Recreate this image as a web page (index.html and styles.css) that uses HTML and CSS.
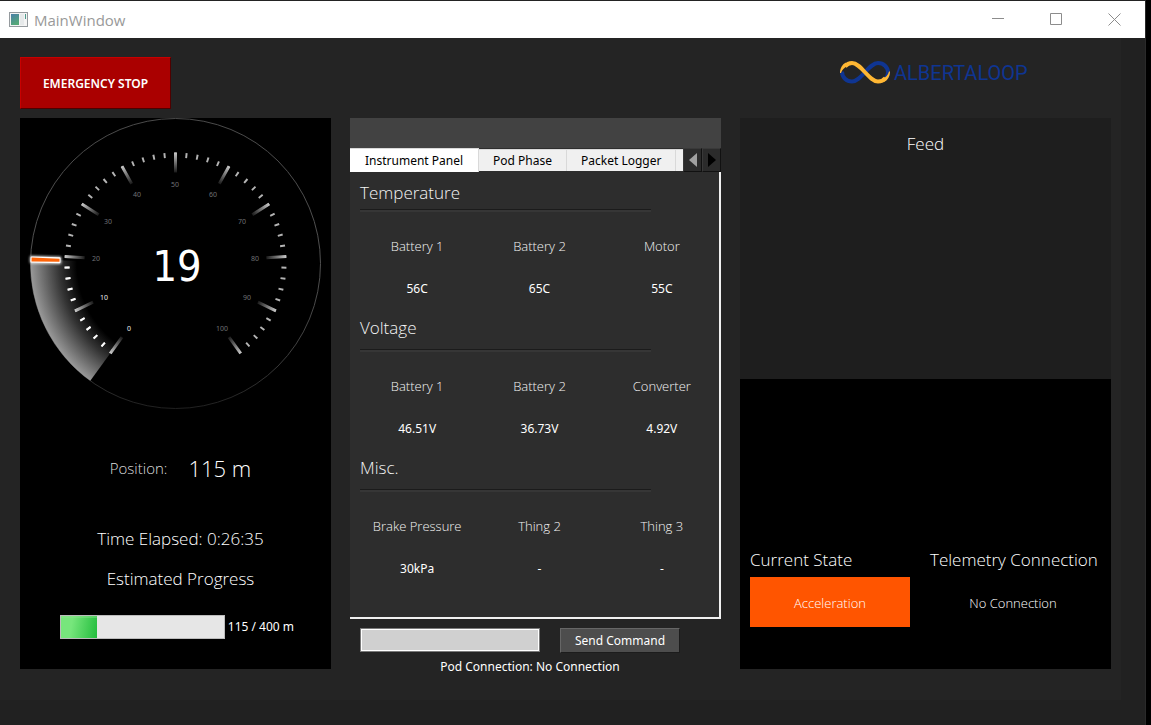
FILE: index.html
```html
<!DOCTYPE html>
<html lang="en">
<head>
<meta charset="utf-8">
<title>MainWindow</title>
<link rel="stylesheet" href="styles.css">
</head>
<body>
<div class="window">
  <header class="titlebar">
    <svg class="app-icon" width="19" height="16" viewBox="0 0 19 16" aria-hidden="true">
      <defs><linearGradient id="app" x1="0" y1="0" x2="0.4" y2="1"><stop offset="0" stop-color="#4a7fa8"/><stop offset="1" stop-color="#55a878"/></linearGradient></defs>
      <rect x="0.5" y="0.5" width="18" height="14" fill="#f4f4f4" stroke="#959a9e"/>
      <rect x="2" y="2" width="8" height="11" fill="url(#app)"/>
      <rect x="11" y="2" width="4" height="11" fill="#e6e9ea"/>
      <rect x="16" y="2" width="1" height="5" fill="#4d9a8b"/>
    </svg>
    <span class="window-title">MainWindow</span>
    <div class="window-buttons">
      <button class="window-button" aria-label="Minimize"><svg width="13" height="13" viewBox="0 0 13 13"><path d="M0 5.500h12"/></svg></button>
      <button class="window-button" aria-label="Maximize"><svg width="13" height="13" viewBox="0 0 13 13"><path d="M.5 .5h11v11h-11z"/></svg></button>
      <button class="window-button" aria-label="Close"><svg width="13" height="13" viewBox="0 0 13 13"><path d="M.5 .5l12 12M12.500 .5l-12 12"/></svg></button>
    </div>
  </header>

  <main class="dashboard">
    <div class="stop-cell"><button class="stop-button">EMERGENCY STOP</button></div>
    <div class="brand">
      <svg width="50" height="25" viewBox="0 0 50 25" aria-hidden="true">
        <g fill="none" stroke-width="4">
          <path stroke="#0f3592" d="M2 11.500C2 17.500 6.500 21.500 12 21.500C21 21.500 29 3 38 3C43.500 3 48 7 48 12.500C48 15 47 17.500 45 19"/>
          <path stroke="#ffb733" d="M5 6.500C7 4 9 3 12 3C21 3 29 21.500 38 21.500C41 21.500 43.500 20.500 45.500 18"/>
          <path stroke="none" fill="#ffb733" d="M0 13C0 8 2.500 4 6 2.500L8 6C4 7.500 2 10 1 13zM50 11.500C50 16.500 47.500 20.500 44 22L42 19C46 17.500 48 15 49 11.500z"/>
        </g>
      </svg>
      <span class="brand-name">ALBERTALOOP</span>
    </div>

    <section class="panel">
      <svg class="gauge" width="311" height="292" viewBox="0 0 311 292" role="img" aria-label="Speed 19">
        <defs>
          <radialGradient id="trail" gradientUnits="userSpaceOnUse" cx="155.5" cy="145.5" r="145">
            <stop offset="0.68" stop-color="#000"/><stop offset="0.8" stop-color="#333"/><stop offset="1" stop-color="#999"/>
          </radialGradient>
          <radialGradient id="tick" gradientUnits="userSpaceOnUse" cx="0" cy="0" r="111">
            <stop offset="0.81" stop-color="#111"/><stop offset="1" stop-color="#c8c8c8"/>
          </radialGradient>
          <linearGradient id="rim" x1="0" y1="0" x2="0" y2="1">
            <stop offset="0" stop-color="#4a4a4a"/><stop offset="0.5" stop-color="#505050"/><stop offset="0.8" stop-color="#404040"/><stop offset="1" stop-color="#202020"/>
          </linearGradient>
          <filter id="glow" x="-20%" y="-100%" width="140%" height="300%"><feGaussianBlur stdDeviation="1"/></filter>
        </defs>
        <circle cx="155.5" cy="145.5" r="145" fill="none" stroke="url(#rim)"/>
        <path fill="url(#trail)" d="M155.500 145.500L70.300 262.800A145 145 0 0 1 10.600 141.500z"/>
        <path class="minor" pathLength="100" d="M91.700 233.300A108.500 108.500 0 1 1 219.300 233.300"/>
        <path class="minor passed" pathLength="19" d="M91.700 233.300A108.500 108.500 0 0 1 47 144.100"/>
        <g class="major" transform="translate(155.5 145.5)">
          <path fill="none" stroke="url(#tick)" d="M-65.200 89.800L-53.500 73.600M-100.400 47.300L-82.400 38.700M-110.800 -7L-90.800 -5.700M-93.700 -59.500L-76.800 -48.800M-53.500 -97.300L-43.800 -79.700M53.500 -97.300L43.800 -79.700M93.700 -59.500L76.800 -48.800M110.800 -7L90.800 -5.700M100.400 47.300L82.400 38.700M65.200 89.800L53.500 73.600"/>
          <path fill="url(#tick)" d="M-1.500 -111h3v20h-3z"/>
        </g>
        <g transform="translate(155.5 145.5) rotate(1.600)">
          <rect x="-146" y="-4" width="32" height="8" rx="2" fill="#fff" opacity="0.7" filter="url(#glow)"/>
          <rect x="-145" y="-3" width="30" height="6" rx="1" fill="#fff"/>
          <path d="M-144 -2L-116 -1.500V1.500L-144 2z" fill="#ff6408"/>
        </g>
        <g class="scale">
          <text class="lit" x="109" y="213">0</text><text class="lit" x="84" y="182">10</text>
          <text x="76" y="143">20</text><text x="88" y="106">30</text><text x="117" y="79">40</text>
          <text x="155" y="69">50</text><text x="193" y="79">60</text><text x="222" y="106">70</text>
          <text x="235" y="143">80</text><text x="227" y="182">90</text><text x="202" y="213">100</text>
        </g>
        <text class="speed" x="157" y="163">19</text>
      </svg>
      <div class="position"><span class="position-label">Position:</span><span class="position-value">115 m</span></div>
      <p class="elapsed">Time Elapsed: 0:26:35</p>
      <label class="progress-title" for="run">Estimated Progress</label>
      <div class="progress-row"><progress class="progress" id="run" max="100" value="22"></progress><span>115 / 400 m</span></div>
    </section>

    <section class="center">
      <div class="tab-spacer"></div>
      <div class="tabs" role="tablist">
        <button class="tab tab-active" role="tab" aria-selected="true">Instrument Panel</button>
        <button class="tab" role="tab">Pod Phase</button>
        <button class="tab" role="tab">Packet Logger</button>
        <span class="tab-rest"></span>
        <button class="scroll" aria-label="Scroll tabs left"><svg width="8" height="14" viewBox="0 0 8 14"><path fill="#a0a0a0" d="M8 0v14L0 7z"/></svg></button>
        <button class="scroll" aria-label="Scroll tabs right"><svg width="8" height="14" viewBox="0 0 8 14"><path d="M0 0v14l8-7z"/></svg></button>
      </div>
      <div class="pane">
        <h2 class="group-title first">Temperature</h2>
        <dl class="readings">
          <div><dt>Battery 1</dt><dd>56C</dd></div><div><dt>Battery 2</dt><dd>65C</dd></div><div><dt>Motor</dt><dd>55C</dd></div>
        </dl>
        <h2 class="group-title">Voltage</h2>
        <dl class="readings">
          <div><dt>Battery 1</dt><dd>46.51V</dd></div><div><dt>Battery 2</dt><dd>36.73V</dd></div><div><dt>Converter</dt><dd>4.92V</dd></div>
        </dl>
        <h2 class="group-title">Misc.</h2>
        <dl class="readings">
          <div><dt>Brake Pressure</dt><dd>30kPa</dd></div><div><dt>Thing 2</dt><dd>-</dd></div><div><dt>Thing 3</dt><dd>-</dd></div>
        </dl>
      </div>
      <form class="command">
        <input class="command-input" type="text" aria-label="Command">
        <button class="command-send" type="button">Send Command</button>
      </form>
      <p class="pod-connection">Pod Connection: No Connection</p>
    </section>

    <section class="panel">
      <div class="feed"><h2 class="feed-title">Feed</h2></div>
      <div class="states">
        <div><h2 class="state-title">Current State</h2><div class="state state-on">Acceleration</div></div>
        <div><h2 class="state-title">Telemetry Connection</h2><div class="state">No Connection</div></div>
      </div>
    </section>
  </main>
</div>
</body>
</html>
```
FILE: styles.css
```css
* { box-sizing: border-box; }
body {
  margin: 0;
  background: #000;
  color: #fff;
  font: 12px/20px "Noto Sans", "DejaVu Sans Condensed", sans-serif;
}
h2, p, dl, dd { margin: 0; font-weight: 300; }
button { font: inherit; padding: 0; border: 0; }

.window {
  display: flex;
  flex-direction: column;
  min-height: 100vh;
  margin-right: 5px;
  border-top: 1px solid #232323;
  border-right: 1px solid #2a2a2a;
  background: #212121;
}
.titlebar {
  display: flex;
  align-items: center;
  height: 37px;
  padding: 0 2px 0 9px;
  background: #fff;
}
.window-title {
  margin-left: 6px;
  color: #999;
  font: 15px/20px "Open Sans", sans-serif;
}
.window-buttons { display: flex; margin-left: auto; }
.window-button {
  display: grid;
  place-items: center;
  width: 58px;
  height: 36px;
  background: none;
}
.window-button svg { fill: none; stroke: #8c8c8c; }

.dashboard {
  flex: 1;
  display: grid;
  grid-template-columns: minmax(0, 311fr) minmax(0, 371fr) minmax(0, 371fr);
  grid-template-rows: 80px 1fr;
  column-gap: 19px;
  margin: 0 24px 25px 0;
  padding: 0 10px 31px 20px;
  background: #242424;
}
.stop-cell { grid-column: 1 / 3; padding-top: 19px; }
.stop-button {
  width: 151px;
  height: 52px;
  padding-top: 2px;
  border: 1px solid;
  border-color: #c80000 #500000 #500000 #c80000;
  background: #aa0000;
  color: #fff;
  font: 600 12px/20px "Noto Sans", sans-serif;
}
.brand { display: flex; align-items: center; gap: 4px; height: 69px; padding-left: 100px; }
.brand-name { color: #0f3592; font: 20px/24px Roboto, sans-serif; }

.panel { display: flex; flex-direction: column; background: #000; }
.gauge { align-self: center; }
.minor { fill: none; stroke: #b4b4b4; stroke-width: 5; stroke-dasharray: 0.36 1.64; stroke-dashoffset: 0.18; }
.passed { stroke: #fff; }
.major { stroke-width: 3; }
.scale { fill: #707074; font-size: 7px; text-anchor: middle; }
.lit { fill: #eee; }
.speed {
  fill: #fff;
  font-family: "DejaVu Sans Condensed", "DejaVu Sans", sans-serif;
  font-size: 43px;
  text-anchor: middle;
}

.position {
  display: flex;
  justify-content: center;
  align-items: center;
  gap: 21px;
  margin-top: 42px;
  padding-left: 10px;
  font: 300 15px/32px "Open Sans", sans-serif;
}
.position-label { color: #ddd; }
.position-value { font-size: 22px; }
.elapsed, .progress-title, .group-title, .feed-title, .state-title {
  font: 300 17px/24px "Open Sans", sans-serif;
}
.elapsed { margin-top: 43px; padding-left: 10px; text-align: center; }
.progress-title { margin-top: 16px; padding-left: 10px; text-align: center; }
.progress-row { display: flex; align-items: center; gap: 3px; margin-top: 24px; padding: 0 37px 0 40px; }
.progress-row span { white-space: nowrap; }
.progress {
  appearance: none;
  flex: 1;
  min-width: 0;
  height: 24px;
  border: 1px solid #bcbcbc;
  background: #e6e6e6;
}
.progress::-webkit-progress-bar { background: #e6e6e6; }
.progress::-webkit-progress-value {
  background: linear-gradient(#8fe58f66 0 2px, transparent 2px), linear-gradient(100deg, #77e67c 30%, #23bd3d);
}

.center { display: flex; flex-direction: column; }
.tab-spacer { height: 30px; background: #424242; }
.tabs { display: flex; align-items: flex-end; height: 24px; background: #2d2d2d; }
.tab {
  height: 22px;
  margin-bottom: 1px;
  padding: 1px 14px 0;
  border-top: 1px solid #d9d9d9;
  border-right: 1px solid #d9d9d9;
  background: #f0f0f0;
  color: #000;
  white-space: nowrap;
}
.tab-active { height: 24px; margin: 0; padding: 0 15px; background: #fff; }
.tab-rest { flex: 1; height: 22px; margin-bottom: 1px; border-top: 1px solid #d9d9d9; background: #f0f0f0; }
.scroll {
  display: grid;
  place-items: center;
  width: 19px;
  height: 24px;
  border: 1px solid;
  border-color: #393939 #111 #111 #393939;
  background: #2b2b2b;
}
.pane {
  flex: 1;
  padding: 9px 0 0 10px;
  border: solid #f0f0f0;
  border-width: 0 2px 2px 0;
  background: #2d2d2d;
}
.group-title { color: #f4f4f4; }
.group-title::after {
  content: "";
  display: block;
  height: 2px;
  margin: 9px 68px 0 0;
  border-top: 1px solid #1b1b1b;
  background: #363636;
}
.group-title.first::after { margin-top: 4px; }
.readings {
  display: grid;
  grid-template-columns: repeat(3, 1fr);
  column-gap: 8px;
  padding: 24px 0 17px;
  text-align: center;
}
.readings dt { color: #f4f4f4; font: 300 13px/20px "Open Sans", sans-serif; }
.readings dd { margin-top: 23px; font-weight: 400; }

.command { display: flex; gap: 20px; padding: 9px 41px 0 10px; }
.command-input {
  flex: 1;
  min-width: 0;
  height: 24px;
  padding: 0 4px;
  border: 1px solid #7a7a7a;
  outline: 1px solid #fff;
  outline-offset: -2px;
  background: #d0d0d0;
  font: inherit;
}
.command-send {
  width: 120px;
  height: 25px;
  padding-top: 1px;
  border: 1px solid;
  border-color: #666 #1c1c1c #1c1c1c #666;
  background: #4d4d4d;
  color: #fff;
}
.pod-connection { margin: 4px 0 -8px; padding: 0 21px 0 10px; font-weight: 400; text-align: center; }

.feed { height: 261px; padding-top: 14px; background: #1e1e1e; text-align: center; }
.states {
  display: grid;
  grid-template-columns: minmax(0, 160fr) minmax(0, 166fr);
  gap: 20px;
  margin-top: auto;
  padding: 0 15px 42px 10px;
}
.state-title { margin-bottom: 5px; white-space: nowrap; }
.state {
  display: grid;
  place-items: center;
  height: 50px;
  padding-top: 2px;
  font: 300 13px/20px "Open Sans", sans-serif;
}
.state-on { background: #ff5500; }
```
